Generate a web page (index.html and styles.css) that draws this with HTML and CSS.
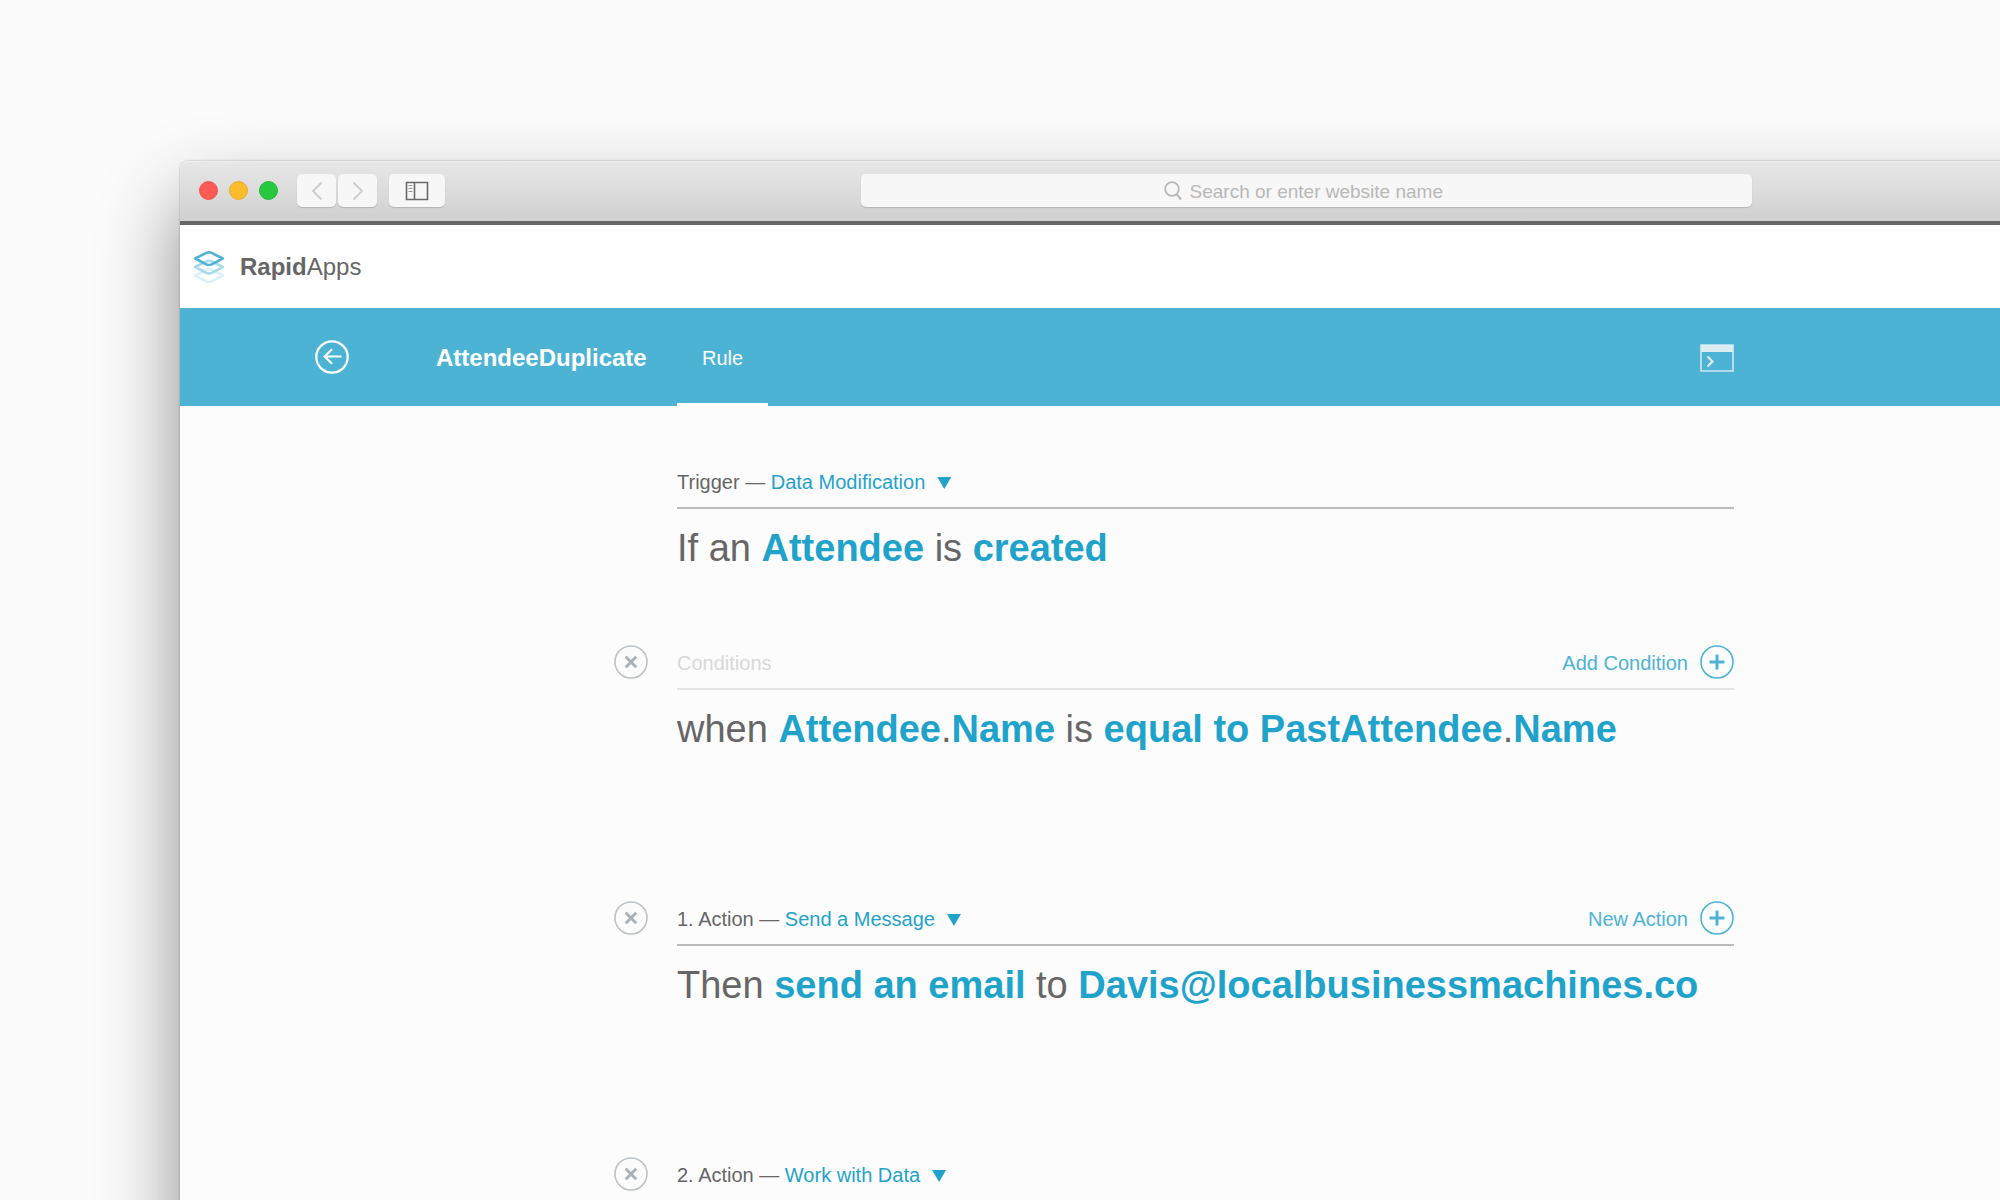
FILE: index.html
```html
<!DOCTYPE html>
<html lang="en">
<head>
<meta charset="utf-8">
<meta name="viewport" content="width=device-width, initial-scale=1">
<title>RapidApps – AttendeeDuplicate</title>
<link rel="stylesheet" href="styles.css">
</head>
<body>
<svg class="sprite" aria-hidden="true">
  <symbol id="remove" viewBox="0 0 34 34">
    <circle cx="17" cy="17" r="16" fill="none" stroke="#bcc2c5" stroke-width="1.6"/>
    <path d="M11.8 11.8L22.2 22.2M22.2 11.8L11.8 22.2" stroke="#aab2b6" stroke-width="3"/>
  </symbol>
  <symbol id="plus" viewBox="0 0 34 34">
    <circle cx="17" cy="17" r="16" fill="none" stroke="#4db3d5" stroke-width="1.6"/>
    <path d="M9.5 17H24.500M17 9.500V24.500" stroke="#4db3d5" stroke-width="3"/>
  </symbol>
</svg>
<div class="window">
  <div class="toolbar">
    <div class="lights"><span class="light red"></span><span class="light yellow"></span><span class="light green"></span></div>
    <div class="history">
      <button class="tool" type="button" aria-label="Back"><svg width="12" height="20" viewBox="0 0 12 20"><path d="M10.500 1.500L2 10L10.500 18.500" fill="none" stroke="#cfcfcf" stroke-width="2"/></svg></button>
      <button class="tool" type="button" aria-label="Forward"><svg width="12" height="20" viewBox="0 0 12 20"><path d="M1.500 1.500L10 10L1.500 18.500" fill="none" stroke="#cfcfcf" stroke-width="2"/></svg></button>
    </div>
    <button class="tool wide" type="button" aria-label="Show sidebar"><svg width="24" height="20" viewBox="0 0 24 20" fill="none" stroke="#6a6a6a" stroke-width="1.600"><path d="M1.500 1.500H22.500V18.500H1.500ZM9.500 1.500V18.500"/><path d="M3.500 4.500H7.500M3.500 7.500H7.500M3.500 10.500H7.500" stroke="#999" stroke-width="1"/></svg></button>
    <label class="address">
      <svg width="18" height="20" viewBox="0 0 18 20" fill="none" stroke="#b8b8b8" stroke-width="1.800"><circle cx="8" cy="8" r="6.800"/><path d="M12.500 13L17 18.500" stroke-width="2.200"/></svg>
      <input class="address-input" type="text" placeholder="Search or enter website name" aria-label="Address">
    </label>
  </div>

  <header class="brand">
    <svg width="32" height="34" viewBox="0 0 30 32" fill="none" stroke-width="2.400" stroke-linejoin="round">
      <path d="M2 24L12.500 18.700Q15 17.600 17.500 18.700L28 24L17.500 29.500Q15 30.600 12.500 29.500Z" stroke="#dbf1f7"/>
      <path d="M2 16L12.500 10.700Q15 9.600 17.500 10.700L28 16L17.500 21.500Q15 22.600 12.500 21.500Z" stroke="#a6d9ea"/>
      <path d="M2 8L12.500 2.700Q15 1.400 17.500 2.700L28 8L17.500 13.500Q15 14.600 12.500 13.500Z" stroke="#4db3d5"/>
    </svg>
    <span class="brand-name"><b>Rapid</b>Apps</span>
  </header>

  <nav class="bar">
    <button class="icon-button" type="button" aria-label="Go back"><svg width="34" height="34" viewBox="0 0 34 34" fill="none" stroke="#fff" stroke-width="2.200"><circle cx="17" cy="17" r="15.700"/><path d="M26.500 16.500H10M17 9.200L9.700 16.500L17 23.800"/></svg></button>
    <h1 class="title">AttendeeDuplicate</h1>
    <a class="tab" href="#rule">Rule</a>
    <button class="icon-button console" type="button" aria-label="Console"><svg width="34" height="28" viewBox="0 0 34 28"><path d="M1 1H33V27H1Z" fill="none" stroke="#cfe8f2" stroke-width="1.600"/><path d="M1 1H33V8H1Z" fill="#dcedf4"/><path d="M7.500 12.500L12.500 17.500L7.500 22.500" fill="none" stroke="#dcedf4" stroke-width="2.200"/></svg></button>
  </nav>

  <main class="rules" id="rule">
    <section class="rule short">
      <div class="body">
        <div class="head"><span class="label">Trigger — <button class="choice" type="button">Data Modification<i class="caret"></i></button></span></div>
        <p class="statement">If an <a href="#entity">Attendee</a> is <a href="#event">created</a></p>
      </div>
    </section>

    <section class="rule">
      <button class="icon-button" type="button" aria-label="Remove conditions"><svg width="34" height="34"><use href="#remove"/></svg></button>
      <div class="body">
        <div class="head light-line"><span class="label muted">Conditions</span>
          <button class="add" type="button"><span class="label">Add Condition</span><svg width="34" height="34"><use href="#plus"/></svg></button></div>
        <p class="statement">when <a href="#field">Attendee</a>.<a href="#field">Name</a> is <a href="#operator">equal to</a> <a href="#value">PastAttendee</a>.<a href="#value">Name</a></p>
      </div>
    </section>

    <section class="rule">
      <button class="icon-button" type="button" aria-label="Remove action 1"><svg width="34" height="34"><use href="#remove"/></svg></button>
      <div class="body">
        <div class="head"><span class="label">1. Action — <button class="choice" type="button">Send a Message<i class="caret"></i></button></span>
          <button class="add" type="button"><span class="label">New Action</span><svg width="34" height="34"><use href="#plus"/></svg></button></div>
        <p class="statement">Then <a href="#message">send an email</a> to <a href="#recipient">Davis@localbusinessmachines.co</a></p>
      </div>
    </section>

    <section class="rule">
      <button class="icon-button" type="button" aria-label="Remove action 2"><svg width="34" height="34"><use href="#remove"/></svg></button>
      <div class="body">
        <div class="head"><span class="label">2. Action — <button class="choice" type="button">Work with Data<i class="caret"></i></button></span></div>
      </div>
    </section>
  </main>
</div>
</body>
</html>
```
FILE: styles.css
```css
* { box-sizing: border-box; }

body {
  margin: 0;
  height: 100vh;
  overflow: hidden;
  padding: 161px 0 0 180px;
  background: #fbfbfb;
  color: #666;
  font-family: "Liberation Sans", Arial, sans-serif;
  font-size: 20px;
}

button {
  padding: 0;
  border: 0;
  background: none;
  color: inherit;
  font: inherit;
}

a { color: inherit; text-decoration: none; }
svg { display: block; flex: none; }
.sprite { position: absolute; width: 0; height: 0; }

/* Browser window, running off the right and bottom edges */
.window {
  min-height: 100vh;
  margin-right: -100px;
  padding-right: 100px;
  border-radius: 8px 0 0 0;
  background: #fcfcfc;
  box-shadow: 0 0 2px rgba(0, 0, 0, .35), 0 40px 80px rgba(0, 0, 0, .45);
}

.toolbar {
  display: flex;
  align-items: center;
  height: 64px;
  margin-right: -100px;
  padding: 0 348px 2px 19px;
  border-top: 1px solid #f0f0f0;
  border-bottom: 4px solid #666;
  border-radius: 8px 0 0 0;
  background: linear-gradient(#e7e7e7, #d0d0d0);
}

.lights { display: flex; gap: 11px; margin-right: 19px; }
.light { width: 19px; height: 19px; border: 1px solid; border-radius: 50%; }
.red { background: #fc5b55; border-color: #ec544e; }
.yellow { background: #fdbc2e; border-color: #eaab28; }
.green { background: #27c83f; border-color: #22b637; }

.history { display: flex; gap: 2px; margin-right: 12px; }
.tool {
  display: grid;
  place-items: center;
  width: 39px;
  height: 33px;
  border-radius: 5px;
  background: #f7f7f7;
  box-shadow: 0 1px 1px rgba(0, 0, 0, .16);
}
.wide { width: 56px; }

.address {
  display: flex;
  flex: 1;
  align-items: center;
  justify-content: center;
  gap: 8px;
  height: 33px;
  margin-left: 416px;
  border-radius: 5px;
  background: #f7f7f7;
  box-shadow: 0 1px 1px rgba(0, 0, 0, .16);
}
.address-input {
  width: 260px;
  padding: 2px 0 0;
  border: 0;
  outline: 0;
  background: none;
  font: inherit;
  font-size: 19px;
}
.address-input::placeholder { color: #b8b8b8; opacity: 1; }

.brand {
  display: flex;
  align-items: center;
  gap: 15px;
  height: 83px;
  margin-right: -100px;
  padding-left: 13px;
  background: #fff;
}
.brand-name { font-size: 24px; }

.bar {
  display: flex;
  align-items: center;
  height: 98px;
  margin-right: -100px;
  padding-left: 135px;
  background: #4db3d5;
  color: #fff;
}
.title { width: 241px; margin: 0 0 0 87px; padding-top: 2px; font-size: 24px; line-height: 28px; }
.tab {
  align-self: stretch;
  padding: 3px 25px 0;
  border-bottom: 3px solid #fff;
  line-height: 95px;
}
.console { margin-left: 932px; padding-top: 2px; }

.rules { padding: 58px 0 0 434px; }
.rule { display: flex; align-items: flex-start; gap: 29px; padding-bottom: 148px; }
.short { padding: 0 0 73px 63px; }
.icon-button { flex: none; }
.body { flex: 1; max-width: 1057px; }

.head {
  display: flex;
  justify-content: space-between;
  padding-bottom: 8px;
  border-bottom: 2px solid #bbb;
}
.light-line { border-bottom-color: #e4e4e4; }
.label { padding-top: 1px; line-height: 34px; }
.muted { color: #d8d8d8; }
.choice { color: #1fa3cb; }
.caret {
  display: inline-block;
  width: 14px;
  height: 12px;
  margin-left: 12px;
  background: #1fa3cb;
  clip-path: polygon(0 0, 100% 0, 50% 100%);
}
.add { display: flex; gap: 12px; height: 34px; color: #4db3d5; }

.statement {
  margin: 0;
  padding-top: 15px;
  font-size: 38px;
  line-height: 48px;
  white-space: nowrap;
}
.statement a { color: #1fa3cb; font-weight: bold; }
```
